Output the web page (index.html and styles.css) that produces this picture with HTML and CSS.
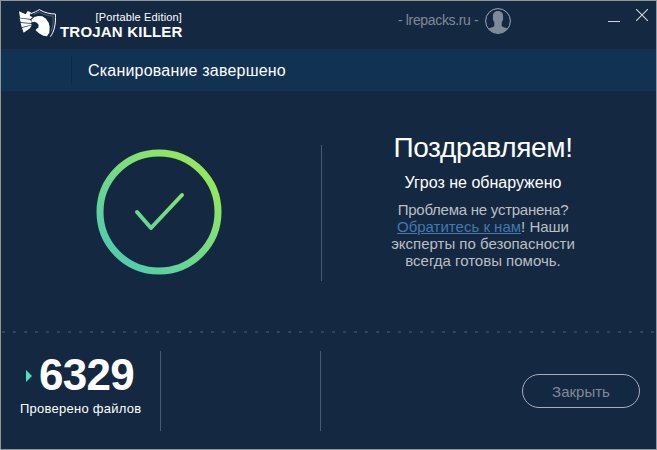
FILE: index.html
```html
<!DOCTYPE html>
<html lang="ru">
<head>
  <meta charset="UTF-8">
  <title>Trojan Killer</title>
  <link rel="stylesheet" href="styles.css">
</head>
<body>
  <div class="window">
    <header class="header">
      <svg class="logo" viewBox="54 24 117 90">
        <path fill="#fff" d="M57 34L77 43 83 33 93 37 89 47 98 52 91 57 60 53ZM59 55L90 59 96 65 93 69 62 67ZM62 69L93 71 95 74 65 82ZM66 84L95 76 90 85 71 98Z"/>
        <path fill="#fff" d="M94 59L103 51 115 48 127 49 138 56 146 68 149 80 148 98 141 109 130 107 117 100 107 91 109 87 115 83 116 75 111 68 103 65 97 67Z"/>
        <path fill="none" stroke="#fff" stroke-width="3" d="M92 41C102 38 111 33 118 29C134 38 149 42 166 42C168 72 163 94 151 110"/>
        <path fill="none" stroke="#8e9aa9" stroke-width="1.500" d="M101 43L118 36C132 44 145 48 159 48C161 68 158 84 153 94"/>
      </svg>
      <div class="brand">
        <div class="edition">[Portable Edition]</div>
        <div class="name">TROJAN KILLER</div>
      </div>
      <div class="user">- lrepacks.ru -</div>
      <svg class="avatar" viewBox="0 0 26 26">
        <circle cx="13" cy="13" r="12.4" fill="none" stroke="#a0a9b5" stroke-width="1"/>
        <path fill="#7e8a9a" d="M13 3C17 3 18.500 6 18 9.500C18.500 11.500 17.500 13 16.700 14.500L16.700 18C18 19.500 21 19.500 22.700 21C17.500 26.500 8.500 26.500 3.300 21C5 19.500 8 19.500 9.300 18L9.300 14.500C8.500 13 7.500 11.500 8 9.500C7.500 6 9 3 13 3Z"/>
      </svg>
      <div class="minimize"></div>
      <svg class="close-icon" viewBox="0 0 12 12">
        <path stroke="#d0d4da" stroke-width="1.100" d="M0 0L12 12M12 0L0 12"/>
      </svg>
    </header>

    <div class="status">
      <div class="status-title">Сканирование завершено</div>
    </div>

    <main class="result">
      <div class="picture">
        <svg class="check" viewBox="0 0 126 126">
          <defs>
            <linearGradient id="green" gradientUnits="userSpaceOnUse" x1="25" y1="105" x2="101" y2="21">
              <stop offset="0" stop-color="#56cdaa"/>
              <stop offset="1" stop-color="#93e75f"/>
            </linearGradient>
          </defs>
          <g fill="none" stroke="url(#green)">
            <circle cx="63" cy="63" r="59" stroke-width="7"/>
            <path stroke-width="4" stroke-linecap="round" stroke-linejoin="round" d="M41 63L55 79L86 46"/>
          </g>
        </svg>
      </div>
      <div class="message">
        <h1>Поздравляем!</h1>
        <h2>Угроз не обнаружено</h2>
        <p><span class="question">Проблема не устранена?</span><br><a href="#">Обратитесь к нам</a>! Наши<br>эксперты по безопасности<br>всегда готовы помочь.</p>
      </div>
    </main>

    <div class="dots"></div>

    <footer class="footer">
      <div class="stat">
        <div class="stat-value"><span class="arrow"></span><span class="number">6329</span></div>
        <div class="stat-label">Проверено файлов</div>
      </div>
      <div class="stat"></div>
      <button class="close">Закрыть</button>
    </footer>
  </div>
</body>
</html>
```
FILE: styles.css
```css
* {
  box-sizing: border-box;
}
body {
  margin: 0;
  font-family: "Liberation Sans", Arial, sans-serif;
  color: #fff;
}
.window {
  width: 657px;
  height: 450px;
  border: 1px solid #8f9697;
  background: #142841;
  overflow: hidden;
  white-space: nowrap;
}
.header {
  display: flex;
  align-items: flex-start;
  height: 48px;
}
.logo {
  width: 39px;
  height: 30px;
  margin: 7px 0 0 17px;
}
.brand {
  width: 124px;
  margin: 10px 0 0 3px;
}
.edition {
  width: 122px;
  font-size: 11px;
  line-height: 13px;
  letter-spacing: 0.150px;
  text-align: right;
}
.name {
  font-size: 15px;
  line-height: 15px;
  font-weight: bold;
  letter-spacing: 0.200px;
}
.user {
  width: 87px;
  margin: 11px 0 0 214px;
  font-size: 14px;
  line-height: 17px;
  letter-spacing: -0.350px;
  color: #7f8998;
}
.avatar {
  width: 26px;
  height: 26px;
  margin-top: 7px;
}
.minimize {
  width: 12px;
  height: 1px;
  margin: 20px 0 0 97px;
  background: #d0d4da;
}
.close-icon {
  width: 12px;
  height: 12px;
  margin: 8px 0 0 16px;
}
.status {
  display: flex;
  align-items: center;
  height: 42px;
  background: #113252;
}
.status-title {
  height: 28px;
  margin-left: 70px;
  padding-left: 16px;
  border-left: 1px solid #0e2941;
  font-size: 16px;
  line-height: 30px;
  letter-spacing: 0.200px;
}
.result {
  display: flex;
  height: 240px;
}
.picture {
  width: 321px;
  height: 136px;
  margin-top: 54px;
  padding: 4px 0 0 95px;
  border-right: 1px solid #4a5a6f;
}
.check {
  display: block;
  width: 126px;
  height: 126px;
}
.message {
  width: 322px;
  padding-top: 40px;
  text-align: center;
}
h1 {
  margin: 0;
  font-size: 28px;
  line-height: 34px;
  font-weight: normal;
  letter-spacing: -0.350px;
}
h2 {
  margin: 8px 0 0;
  font-size: 16px;
  line-height: 20px;
  font-weight: normal;
}
p {
  margin: 8px 0 0;
  font-size: 15px;
  line-height: 17px;
  color: #bcbfc2;
}
.question {
  letter-spacing: -0.250px;
}
a {
  color: #4279ae;
}
.dots {
  height: 2px;
  margin-left: 1px;
  background: repeating-linear-gradient(to right, #31435b 0 3px, transparent 3px 11px);
}
.footer {
  display: flex;
  align-items: flex-start;
  padding-top: 18px;
}
.stat {
  width: 160px;
  height: 80px;
  border-right: 1px solid #4a5a6f;
}
.stat-value {
  display: flex;
  align-items: center;
  height: 49px;
  padding-left: 25px;
}
.arrow {
  margin-right: 7px;
  border: solid transparent;
  border-width: 6px 0 6px 6px;
  border-left-color: #4de0c0;
}
.number {
  padding-bottom: 2px;
  font-size: 44px;
  line-height: 49px;
  font-weight: bold;
  letter-spacing: -0.700px;
}
.stat-label {
  padding-left: 19px;
  font-size: 13px;
  line-height: 17px;
  letter-spacing: 0.250px;
}
.close {
  width: 118px;
  height: 34px;
  margin: 23px 0 0 201px;
  padding: 0;
  border: 1px solid #a6aeb9;
  border-radius: 17px;
  background: none;
  font-family: inherit;
  font-size: 15px;
  color: #7f8998;
}
```
